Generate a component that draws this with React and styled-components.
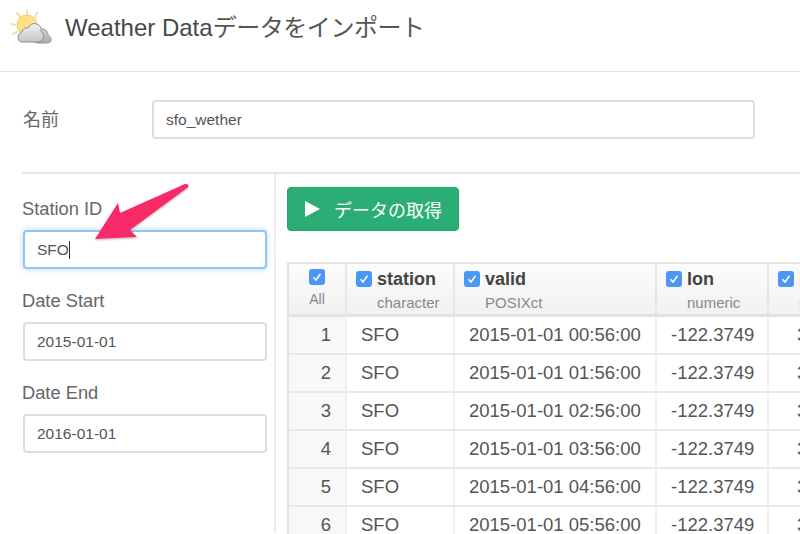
import React from 'react';
import styled, { createGlobalStyle } from 'styled-components';

const GlobalStyle = createGlobalStyle`
  html, body {
    margin: 0;
    padding: 0;
    background: #fff;
  }
  * { box-sizing: border-box; }
`;

const Page = styled.div`
  position: relative;
  width: 800px;
  height: 534px;
  overflow: hidden;
  font-family: "Liberation Sans", "Noto Sans CJK JP", sans-serif;
  color: #555;
`;

const Header = styled.header`
  display: flex;
  align-items: flex-start;
  height: 72px;
  padding: 10px 0 0 10px;
  border-bottom: 1px solid #e5e5e5;
`;

const Title = styled.h1`
  margin: 4px 0 0 13px;
  font-size: 24px;
  line-height: 28px;
  font-weight: 400;
  color: #484848;
`;

const TitleKana = styled.span`
  letter-spacing: -0.45px;
  color: #555;
`;

const NameRow = styled.div`
  display: flex;
  align-items: center;
  margin-left: 23px;
  padding: 28px 0 33px;
`;

const NameLabel = styled.label`
  width: 129px;
  padding-bottom: 3px;
  font-size: 18px;
  color: #666;
`;

const TextInput = styled.div`
  display: flex;
  align-items: center;
  width: ${(p) => p.$width}px;
  height: 39px;
  padding-left: 12px;
  background: #fff;
  border: 2px solid ${(p) => (p.$focused ? '#8fc4f5' : '#ddd')};
  border-radius: 4px;
  box-shadow: ${(p) => (p.$focused ? '0 0 6px rgba(102,175,233,0.45)' : 'none')};
  font-size: 15.5px;
  color: #555;
`;

const Caret = styled.span`
  display: inline-block;
  width: 1px;
  height: 18px;
  background: #333;
`;

const Body = styled.div`
  display: flex;
  margin-left: 22px;
  height: 361px;
  border-top: 2px solid #e6e6e6;
`;

const Sidebar = styled.aside`
  width: 254px;
  padding: 25px 8px 0 1px;
  border-right: 2px solid #eee;
`;

const Field = styled.div`
  margin-bottom: 22px;
`;

const FieldLabel = styled.label`
  display: block;
  margin: 0 0 11px -1px;
  font-size: 18.3px;
  line-height: 20px;
  color: #666;
`;

const Main = styled.main`
  flex: 1;
  min-width: 0;
  padding: 13px 0 0 11px;
`;

const FetchButton = styled.button`
  display: flex;
  align-items: center;
  gap: 14px;
  width: 172px;
  height: 44px;
  padding: 0 0 0 16px;
  background: #2bae75;
  border: 1px solid #27a36d;
  border-radius: 4px;
  color: #fff;
  font-family: inherit;
  font-size: 18px;
`;

const TableWrap = styled.div`
  width: 513px;
  margin-top: 31px;
`;

const Grid = styled.table`
  table-layout: fixed;
  width: 600px;
  border-collapse: separate;
  border-spacing: 0;
  border-left: 2px solid #e2e2e2;
  border-top: 2px solid #e2e2e2;
`;

const HeadCell = styled.th`
  width: ${(p) => p.$width}px;
  height: 53px;
  padding: 5px 0 0 9px;
  vertical-align: top;
  text-align: left;
  font-weight: 400;
  background: linear-gradient(#fcfcfc, #f1f1f1);
  border-right: 2px solid #e6e6e6;
  border-bottom: 3px solid #e2e2e2;
`;

const AllCell = styled(HeadCell)`
  padding: 5px 0 0;
  text-align: center;
`;

const ColName = styled.div`
  display: flex;
  align-items: center;
  gap: 5px;
  font-size: 18px;
  line-height: 20px;
  font-weight: 700;
  color: #444;
`;

const ColType = styled.div`
  margin: 5px 0 0 21px;
  font-size: 15px;
  line-height: 17px;
  color: #888;
`;

const AllLabel = styled.div`
  margin-top: 4px;
  font-size: 14px;
  line-height: 17px;
  color: #888;
`;

const Box = styled.span`
  display: inline-flex;
  align-items: center;
  justify-content: center;
  width: 16px;
  height: 16px;
  background: #4a97f5;
  border-radius: 3px;
`;

const Row = styled.tr`
  height: 38px;
`;

const Cell = styled.td`
  padding: 0 0 0 14px;
  font-size: 18.5px;
  color: #555;
  white-space: nowrap;
  background: #fff;
  border-right: 2px solid #f0f0f0;
  border-bottom: 2px solid #e8e8e8;
`;

const NumCell = styled(Cell)`
  padding: 0 14px 0 0;
  text-align: right;
  background: #f8f8f8;
`;

const LatCell = styled(Cell)`
  padding-left: 28px;
`;

const Arrow = styled.svg`
  position: absolute;
  left: 85px;
  top: 178px;
`;

function Check() {
  return (
    <Box>
      <svg width="12" height="12" viewBox="0 0 12 12">
        <path d="M2.5 6.2 L5 9 L9.5 2.8" fill="none" stroke="#fff" strokeWidth="1.5" />
      </svg>
    </Box>
  );
}

function WeatherIcon() {
  return (
    <svg width="42" height="36" viewBox="0 0 42 36">
      <defs>
        <linearGradient id="frontCloud" x1="0" y1="0" x2="0" y2="1">
          <stop offset="0" stopColor="#f2f2f2" />
          <stop offset="1" stopColor="#c4c5c4" />
        </linearGradient>
        <linearGradient id="backCloud" x1="0" y1="0" x2="0" y2="1">
          <stop offset="0" stopColor="#d4d5d4" />
          <stop offset="1" stopColor="#a9aba9" />
        </linearGradient>
      </defs>
      <g stroke="#f9dcae" strokeWidth="2.2" strokeLinecap="round">
        <path d="M17 0 L17 4" />
        <path d="M7 3 L10 7" />
        <path d="M1 14 L5 15" />
        <path d="M27 3 L25 7" />
        <path d="M3 24 L7 22" />
      </g>
      <circle cx="17" cy="15" r="10" fill="#fbe289" stroke="#f0cf75" />
      <path
        d="M28 33 Q23 33 23 28 L26 21 Q28 17 33 19 Q38 20 38 25 Q42 27 41 31 Q40 33 38 33 Z"
        fill="url(#backCloud)"
        stroke="#999"
      />
      <path
        d="M12 32 Q8 32 8 27 Q8 23 12 22 Q13 17 18 18 Q21 12 27 14 Q32 16 31 21 Q35 24 33 29 Q32 32 29 32 Z"
        fill="url(#frontCloud)"
        stroke="#8f8f8f"
      />
    </svg>
  );
}

const columns = [
  { name: 'station', type: 'character', width: 108 },
  { name: 'valid', type: 'POSIXct', width: 202 },
  { name: 'lon', type: 'numeric', width: 112 },
  { name: 'lat', type: 'numeric', width: 120 },
];

const hours = ['00', '01', '02', '03', '04', '05', '06'];

export default function App() {
  return (
    <Page>
      <GlobalStyle />
      <Header>
        <WeatherIcon />
        <Title>
          Weather Data<TitleKana>データをインポート</TitleKana>
        </Title>
      </Header>
      <NameRow>
        <NameLabel>名前</NameLabel>
        <TextInput $width={603}>sfo_wether</TextInput>
      </NameRow>
      <Body>
        <Sidebar>
          <Field>
            <FieldLabel>Station ID</FieldLabel>
            <TextInput $width={244} $focused>
              SFO<Caret />
            </TextInput>
          </Field>
          <Field>
            <FieldLabel>Date Start</FieldLabel>
            <TextInput $width={244}>2015-01-01</TextInput>
          </Field>
          <Field>
            <FieldLabel>Date End</FieldLabel>
            <TextInput $width={244}>2016-01-01</TextInput>
          </Field>
        </Sidebar>
        <Main>
          <FetchButton>
            <svg width="16" height="16" viewBox="0 0 16 16">
              <path d="M1 0 L16 8 L1 16 Z" fill="#fff" />
            </svg>
            データの取得
          </FetchButton>
          <TableWrap>
            <Grid>
              <thead>
                <tr>
                  <AllCell $width={58}>
                    <Check />
                    <AllLabel>All</AllLabel>
                  </AllCell>
                  {columns.map((c) => (
                    <HeadCell key={c.name} $width={c.width}>
                      <ColName>
                        <Check />
                        {c.name}
                      </ColName>
                      <ColType>{c.type}</ColType>
                    </HeadCell>
                  ))}
                </tr>
              </thead>
              <tbody>
                {hours.map((h, i) => (
                  <Row key={h}>
                    <NumCell>{i + 1}</NumCell>
                    <Cell>SFO</Cell>
                    <Cell>2015-01-01 {h}:56:00</Cell>
                    <Cell>-122.3749</Cell>
                    <LatCell>37.6197</LatCell>
                  </Row>
                ))}
              </tbody>
            </Grid>
          </TableWrap>
        </Main>
      </Body>
      <Arrow width="110" height="70" viewBox="0 0 110 70">
        <defs>
          <filter id="arrowShadow" x="-10%" y="-10%" width="120%" height="130%">
            <feDropShadow dx="0" dy="1" stdDeviation="1" floodColor="#000" floodOpacity="0.3" />
          </filter>
        </defs>
        <path
          d="M102 6 Q105 8 102 10 L45 52 L52 59 L10 61 L33 25 L35 35 L100 6 Z"
          fill="#f92a68"
          filter="url(#arrowShadow)"
        />
      </Arrow>
    </Page>
  );
}
